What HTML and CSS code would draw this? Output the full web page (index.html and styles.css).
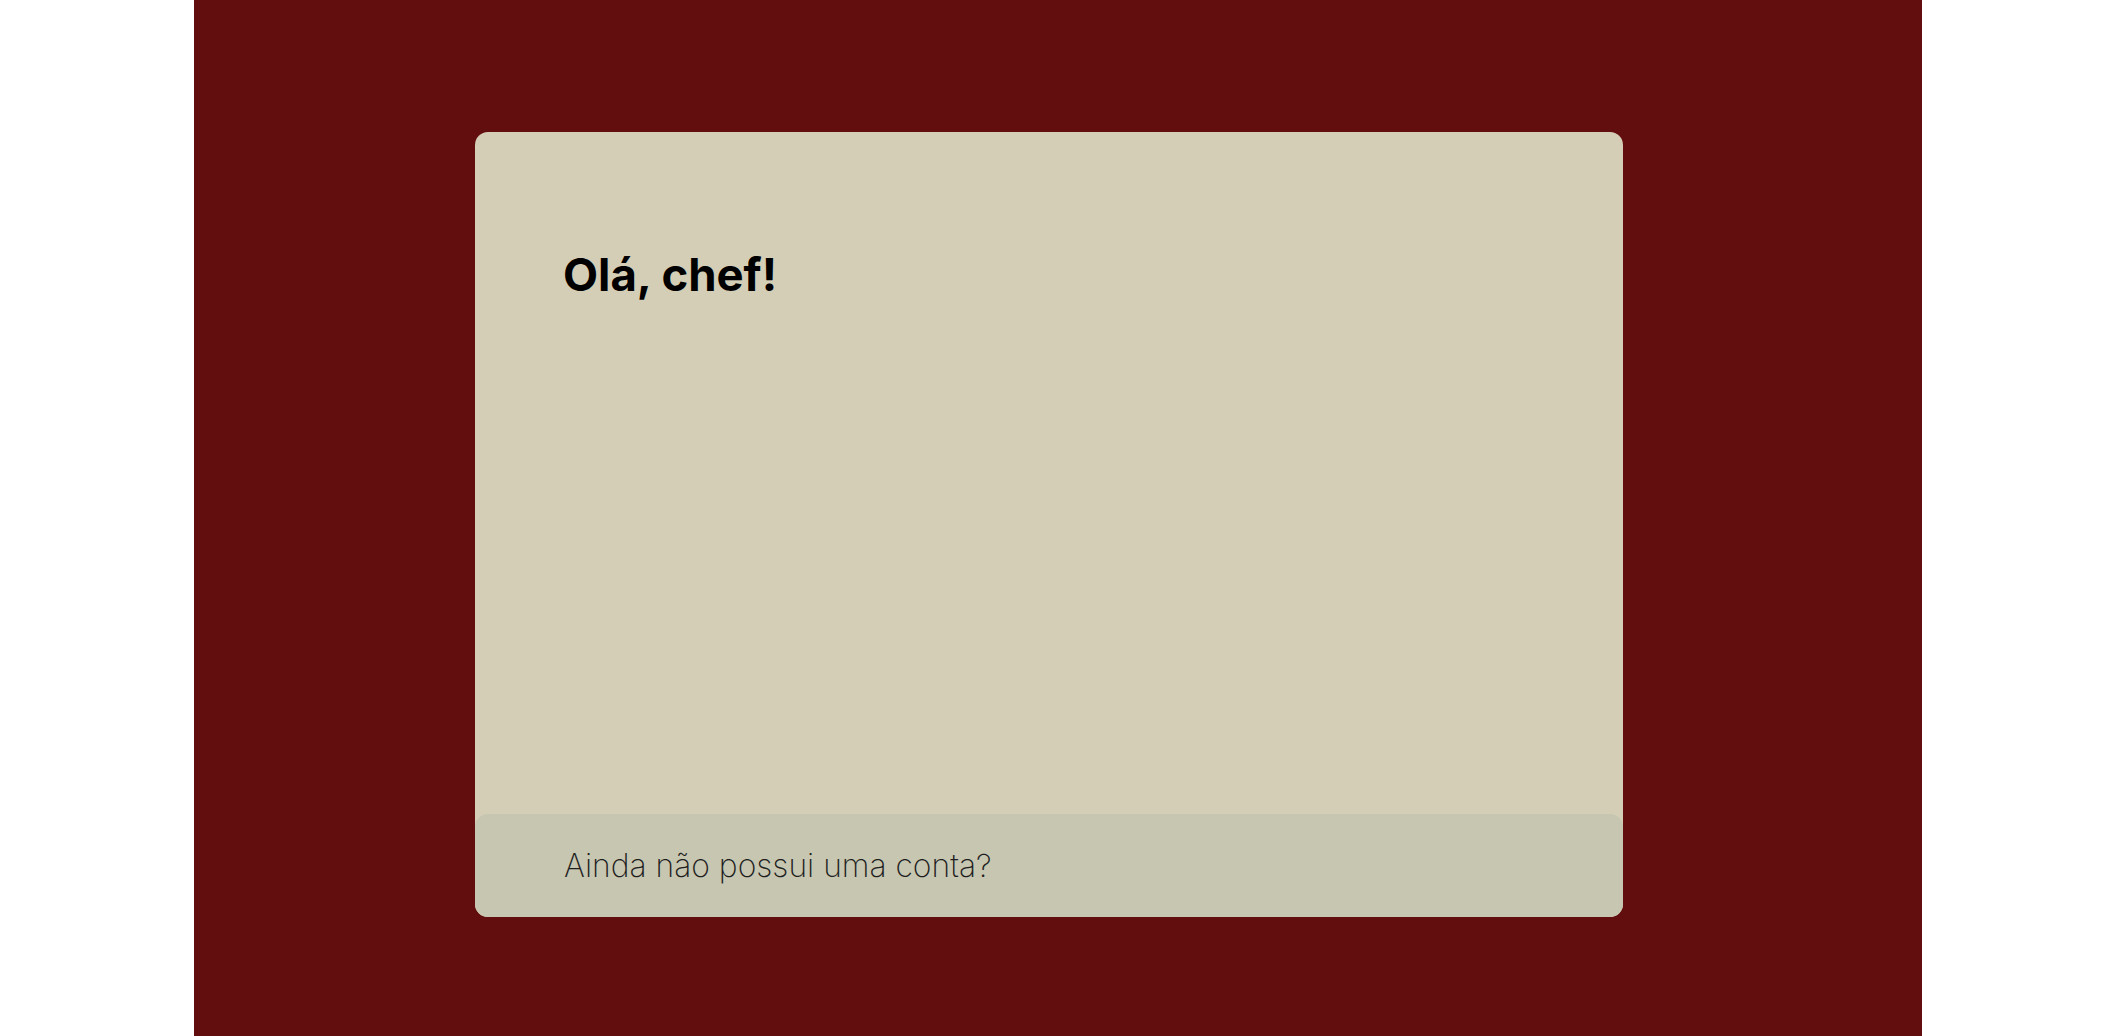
FILE: index.html
```html
<!DOCTYPE html>
<html lang="pt">
<head>
<meta charset="utf-8">
<link rel="stylesheet" href="styles.css">
</head>
<body>
<main class="page">
  <section class="card">
    <div class="card-body">
      <h1 class="title">Olá, chef!</h1>
    </div>
    <footer class="card-footer">
      <p class="signup">Ainda não possui uma conta?</p>
    </footer>
  </section>
</main>
</body>
</html>
```
FILE: styles.css
```css
html, body {
  margin: 0;
  height: 100%;
  background: #ffffff;
}
body {
  display: flex;
  justify-content: center;
}
.page {
  width: 1728px;
  height: 1036px;
  margin-left: 1px;
  background: #630e0e;
  box-sizing: border-box;
  padding: 132px 299px 0 281px;
}
.card {
  height: 785px;
  background: #d4ceb7;
  border-radius: 13px;
  display: flex;
  flex-direction: column;
  overflow: hidden;
}
.card-body {
  flex: 1;
  padding: 0 0 0 88px;
}
.title {
  margin: 0;
  padding-top: 115px;
  font-family: Inter, "Noto Sans", sans-serif;
  font-weight: 700;
  font-size: 45.5px;
  line-height: 56px;
  letter-spacing: 0;
  color: #000;
}
.card-footer {
  height: 103px;
  background: #c7c6b1;
  border-radius: 13px 13px 0 0;
  display: flex;
  align-items: center;
  padding-left: 89px;
}
.signup {
  margin: 0;
  font-family: Inter, Roboto, sans-serif;
  font-weight: 200;
  font-size: 31.8px;
  letter-spacing: 0;
  color: #1e1e1e;
}
```
